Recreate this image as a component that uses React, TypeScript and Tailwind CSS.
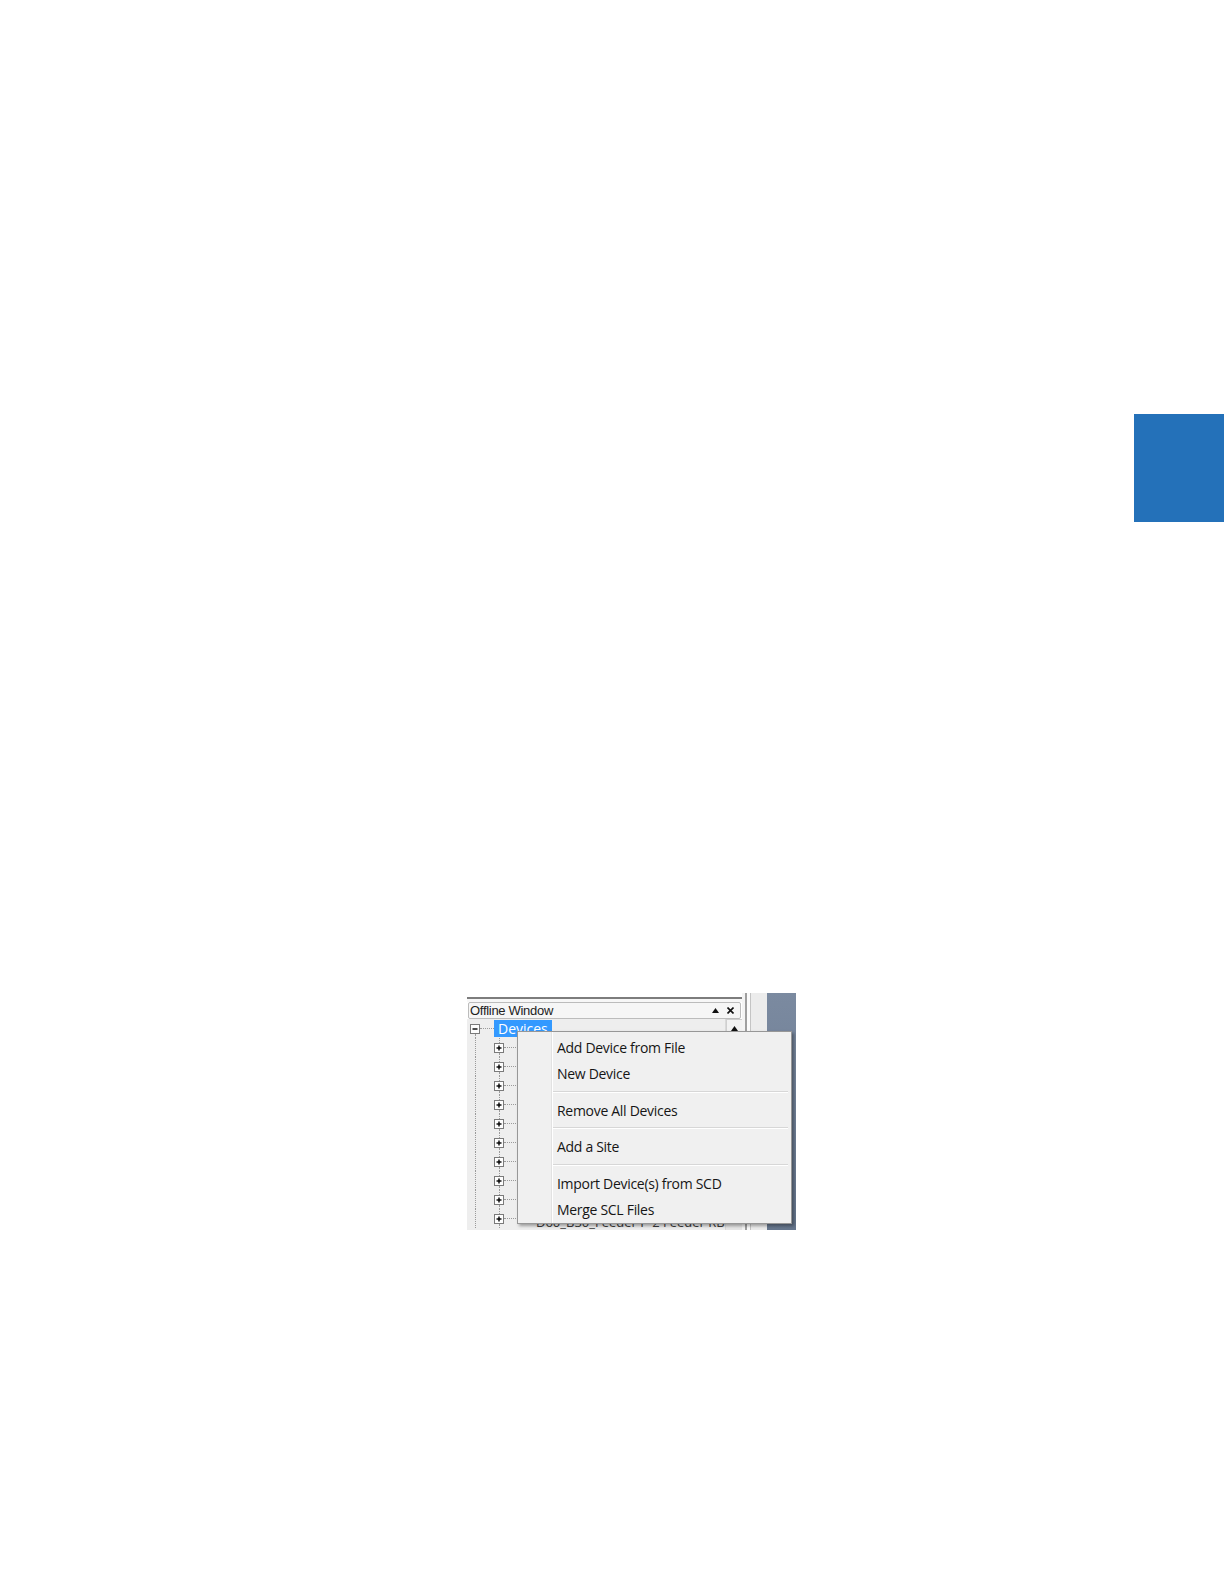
import React from "react";

const treeRows = [
  "D60_B30_Bus Feeder 1",
  "D60_B31_Bus Feeder 2",
  "F60_B32_Feeder 3",
  "F60_B33_Feeder 4",
  "T60_B34_Transformer",
  "L90_B35_Line 1",
  "L90_B36_Line 2",
  "C60_B37_Breaker",
  "N60_B38_Network",
  "D60_B30_Feeder P-2 Feeder RB",
];

const menuGroups = [
  ["Add Device from File", "New Device"],
  ["Remove All Devices"],
  ["Add a Site"],
  ["Import Device(s) from SCD", "Merge SCL Files"],
];

function PlusBox({ minus }: { minus?: boolean }) {
  return (
    <div className="w-[10px] h-[10px] border border-[#7a7a7a] bg-[#fdfdfd] flex items-center justify-center shrink-0">
      <svg width="8" height="8" viewBox="0 0 8 8">
        <path d="M1.5 4h5" stroke="#000" strokeWidth="1.4" />
        {!minus && <path d="M4 1.5v5" stroke="#000" strokeWidth="1.4" />}
      </svg>
    </div>
  );
}

function ContextMenu() {
  return (
    <div className="absolute left-[50px] top-[38px] w-[275px] h-[193px] bg-[#f0f0f0] border border-[#979797] shadow-[2px_2px_3px_rgba(0,0,0,0.35)] flex">
      <div className="w-[33px] shrink-0" />
      <div className="w-px bg-[#e2e2e2] shrink-0" />
      <div className="w-px bg-white shrink-0" />
      <div className="flex-1 flex flex-col pt-[2px] pr-[3px]">
        {menuGroups.map((group, gi) => (
          <React.Fragment key={gi}>
            {gi > 0 && (
              <div className={`${gi === 2 ? "h-[10px]" : "h-[11px]"} flex flex-col justify-center`}>
                <div className="h-px bg-[#d7d7d7]" />
                <div className="h-px bg-white" />
              </div>
            )}
            {group.map((item) => (
              <div key={item} className="h-[26px] flex items-center pl-[4px] text-[14px] font-medium tracking-[-0.3px] text-[#161616]">
                {item}
              </div>
            ))}
          </React.Fragment>
        ))}
      </div>
    </div>
  );
}

function Screenshot() {
  return (
    <div className="relative w-[329px] h-[237px] overflow-hidden bg-white flex">
      <div className="w-[275px] shrink-0 flex flex-col">
        <div className="h-[4px]" />
        <div className="h-[2px] bg-[#7d7d7d]" />
        <div className="h-[3px] bg-[#f7f7f7]" />
        <div className="h-[17px] mx-[1px] border border-[#bcbcbc] rounded-[2px] bg-[#f6f6f6] flex items-center pl-[1px] pr-[6px] font-['Liberation_Sans',sans-serif] text-[13px] text-[#222]">
          <span className="flex-1 tracking-[-0.3px]">Offline Window</span>
          <svg width="7" height="5" viewBox="0 0 7 5" className="mr-[8px]">
            <path d="M0 5L3.5 0L7 5Z" fill="#111" />
          </svg>
          <svg width="7" height="7" viewBox="0 0 7 7">
            <path d="M0.5 0.5L6.5 6.5M6.5 0.5L0.5 6.5" stroke="#111" strokeWidth="1.6" />
          </svg>
        </div>
        <div className="flex-1 flex bg-[#eeeeee]">
          <div className="flex-1 flex flex-col">
            <div className="h-[19px] flex items-center">
              <div className="w-[3px]" />
              <div className="w-[10px] h-full flex flex-col items-center">
                <div className="flex-1" />
                <PlusBox minus />
                <div className="flex-1 border-l border-dotted border-[#9a9a9a]" />
              </div>
              <div className="w-[14px] border-t border-dotted border-[#9a9a9a]" />
              <div className="h-[17px] bg-[#3399ff] text-white px-[4px] flex items-center text-[14px] leading-none">
                Devices
              </div>
            </div>
            {treeRows.map((row, i) => (
              <div key={row} className="h-[19px] flex items-center">
                <div className="w-[3px]" />
                <div className="w-[10px] h-full flex justify-center">
                  <div className="w-px h-full border-l border-dotted border-[#9a9a9a]" />
                </div>
                <div className="w-[14px]" />
                <div className="w-[10px] h-full flex flex-col items-center">
                  <div className="flex-1 border-l border-dotted border-[#9a9a9a]" />
                  <PlusBox />
                  <div className="flex-1 border-l border-dotted border-[#9a9a9a]" />
                </div>
                <div className="w-[12px] border-t border-dotted border-[#9a9a9a]" />
                <div className="w-[20px]" />
                <div
                  className={`text-[13px] font-medium text-[#3a3a3a] whitespace-nowrap ${
                    i === treeRows.length - 1 ? "translate-y-[4px]" : ""
                  }`}
                >
                  {row}
                </div>
              </div>
            ))}
          </div>
          <div className="w-[19px] shrink-0 bg-[#e6e6e6] border-l border-[#d9d9d9] flex flex-col">
            <div className="h-[18px] bg-[#f2f2f2] border border-[#cfcfcf] flex items-center justify-center">
              <svg width="7" height="5" viewBox="0 0 7 5">
                <path d="M0 5L3.5 0L7 5Z" fill="#111" />
              </svg>
            </div>
          </div>
        </div>
      </div>
      <div className="w-[3px] bg-[#f4f4f4]" />
      <div className="w-[2px] bg-[#9f9f9f]" />
      <div className="w-[3px] bg-[#fbfbfb]" />
      <div className="w-px bg-[#c4c4c4]" />
      <div className="w-[16px] bg-[#ececec]" />
      <div className="flex-1 bg-gradient-to-b from-[#7b8aa0] to-[#66768d]" />
      <ContextMenu />
    </div>
  );
}

export default function App() {
  return (
    <div className="w-[1224px] h-[1584px] bg-white overflow-hidden font-['Open_Sans',sans-serif] flex flex-col">
      <div className="h-[414px]" />
      <div className="flex justify-end">
        <div className="w-[90px] h-[108px] bg-[#2471b9]" />
      </div>
      <div className="h-[471px]" />
      <div className="pl-[467px]">
        <Screenshot />
      </div>
    </div>
  );
}
